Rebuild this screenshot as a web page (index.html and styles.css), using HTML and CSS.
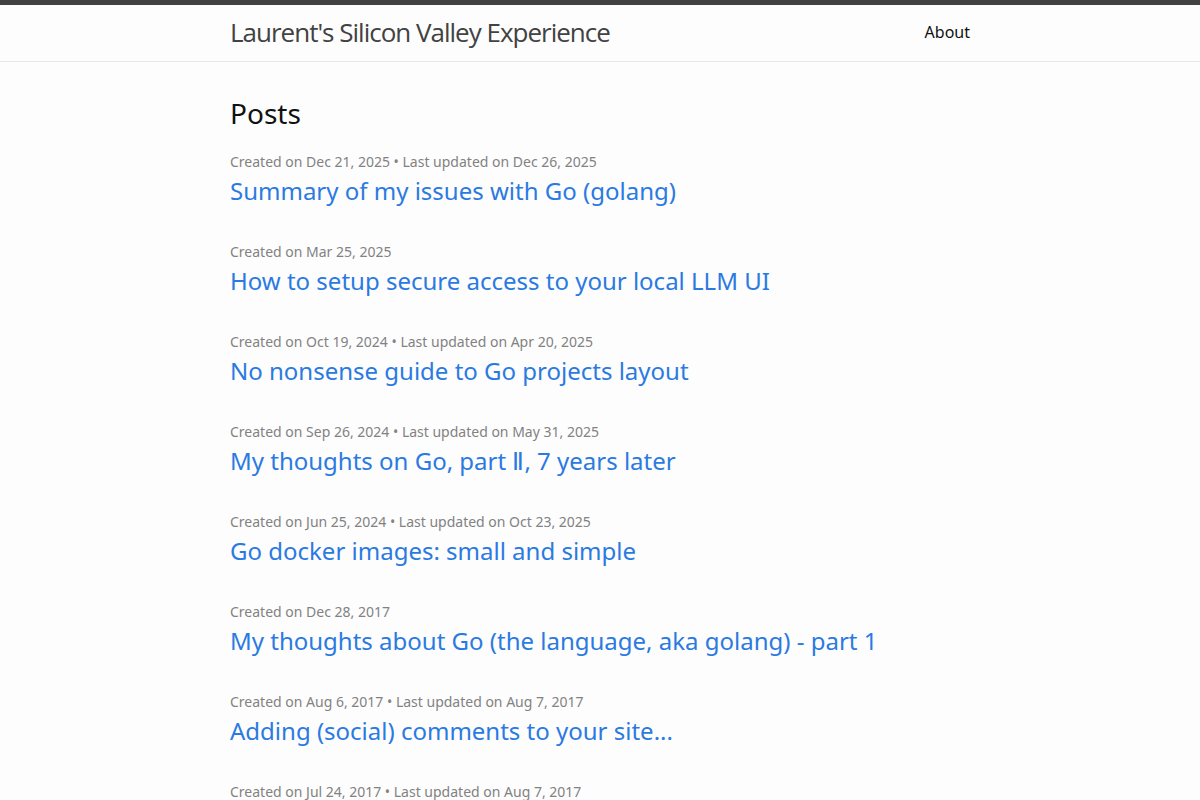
FILE: index.html
```html
<!DOCTYPE html>
<html lang="en">
<head>
<meta charset="utf-8">
<title>Laurent's Silicon Valley Experience</title>
<link rel="stylesheet" href="styles.css">
</head>
<body>
<header class="site-header">
  <div class="wrapper header-row">
    <a class="site-title" href="#">Laurent's Silicon Valley Experience</a>
    <nav class="site-nav"><a class="page-link" href="#">About</a></nav>
  </div>
</header>
<main class="page-content">
  <div class="wrapper">
    <h2 class="post-list-heading">Posts</h2>
    <ul class="post-list">
      <li><span class="post-meta">Created on Dec 21, 2025 • Last updated on Dec 26, 2025</span>
        <h3><a class="post-link" href="#">Summary of my issues with Go (golang)</a></h3></li>
      <li><span class="post-meta">Created on Mar 25, 2025</span>
        <h3><a class="post-link" href="#">How to setup secure access to your local LLM UI</a></h3></li>
      <li><span class="post-meta">Created on Oct 19, 2024 • Last updated on Apr 20, 2025</span>
        <h3><a class="post-link" href="#">No nonsense guide to Go projects layout</a></h3></li>
      <li><span class="post-meta">Created on Sep 26, 2024 • Last updated on May 31, 2025</span>
        <h3><a class="post-link" href="#">My thoughts on Go, part Ⅱ, 7 years later</a></h3></li>
      <li><span class="post-meta">Created on Jun 25, 2024 • Last updated on Oct 23, 2025</span>
        <h3><a class="post-link" href="#">Go docker images: small and simple</a></h3></li>
      <li><span class="post-meta">Created on Dec 28, 2017</span>
        <h3><a class="post-link" href="#">My thoughts about Go (the language, aka golang) - part 1</a></h3></li>
      <li><span class="post-meta">Created on Aug 6, 2017 • Last updated on Aug 7, 2017</span>
        <h3><a class="post-link" href="#">Adding (social) comments to your site...</a></h3></li>
      <li><span class="post-meta">Created on Jul 24, 2017 • Last updated on Aug 7, 2017</span>
        <h3><a class="post-link" href="#">Setting up a simple static blog</a></h3></li>
    </ul>
  </div>
</main>
</body>
</html>
```
FILE: styles.css
```css
html, body { margin: 0; padding: 0; }
body {
  font-family: "Noto Sans", "Open Sans", sans-serif;
  font-size: 16px;
  line-height: 1.5;
  color: #111;
  background: #fdfdfd;
}
a { text-decoration: none; }
.wrapper {
  max-width: 740px;
  margin: 0 auto;
  padding: 0 30px;
}
.site-header {
  border-top: 5px solid #424242;
  border-bottom: 1px solid #e8e8e8;
  min-height: 56px;
  box-sizing: border-box;
  height: 62px;
}
.header-row {
  display: flex;
  justify-content: space-between;
  align-items: flex-start;
}
.site-title {
  font-family: "Open Sans", "Noto Sans", sans-serif;
  font-size: 26px;
  font-weight: 400;
  line-height: 54px;
  letter-spacing: -1px;
  color: #424242;
}
.page-link {
  color: #111;
  line-height: 54px;
  font-size: 16px;
}
.page-content { padding: 30px 0; }
.post-list-heading {
  font-size: 28px;
  font-weight: 400;
  margin: 0 0 15px;
  line-height: 42px;
}
.post-list {
  list-style: none;
  margin: 0;
  padding: 0;
}
.post-list li { margin-bottom: 30px; }
.post-meta {
  font-size: 14px;
  color: #828282;
}
.post-list h3 {
  margin: 0;
  font-weight: 400;
  font-size: 24px;
  line-height: 36px;
}
.post-link { color: #2a7ae2; display: block; }
```
